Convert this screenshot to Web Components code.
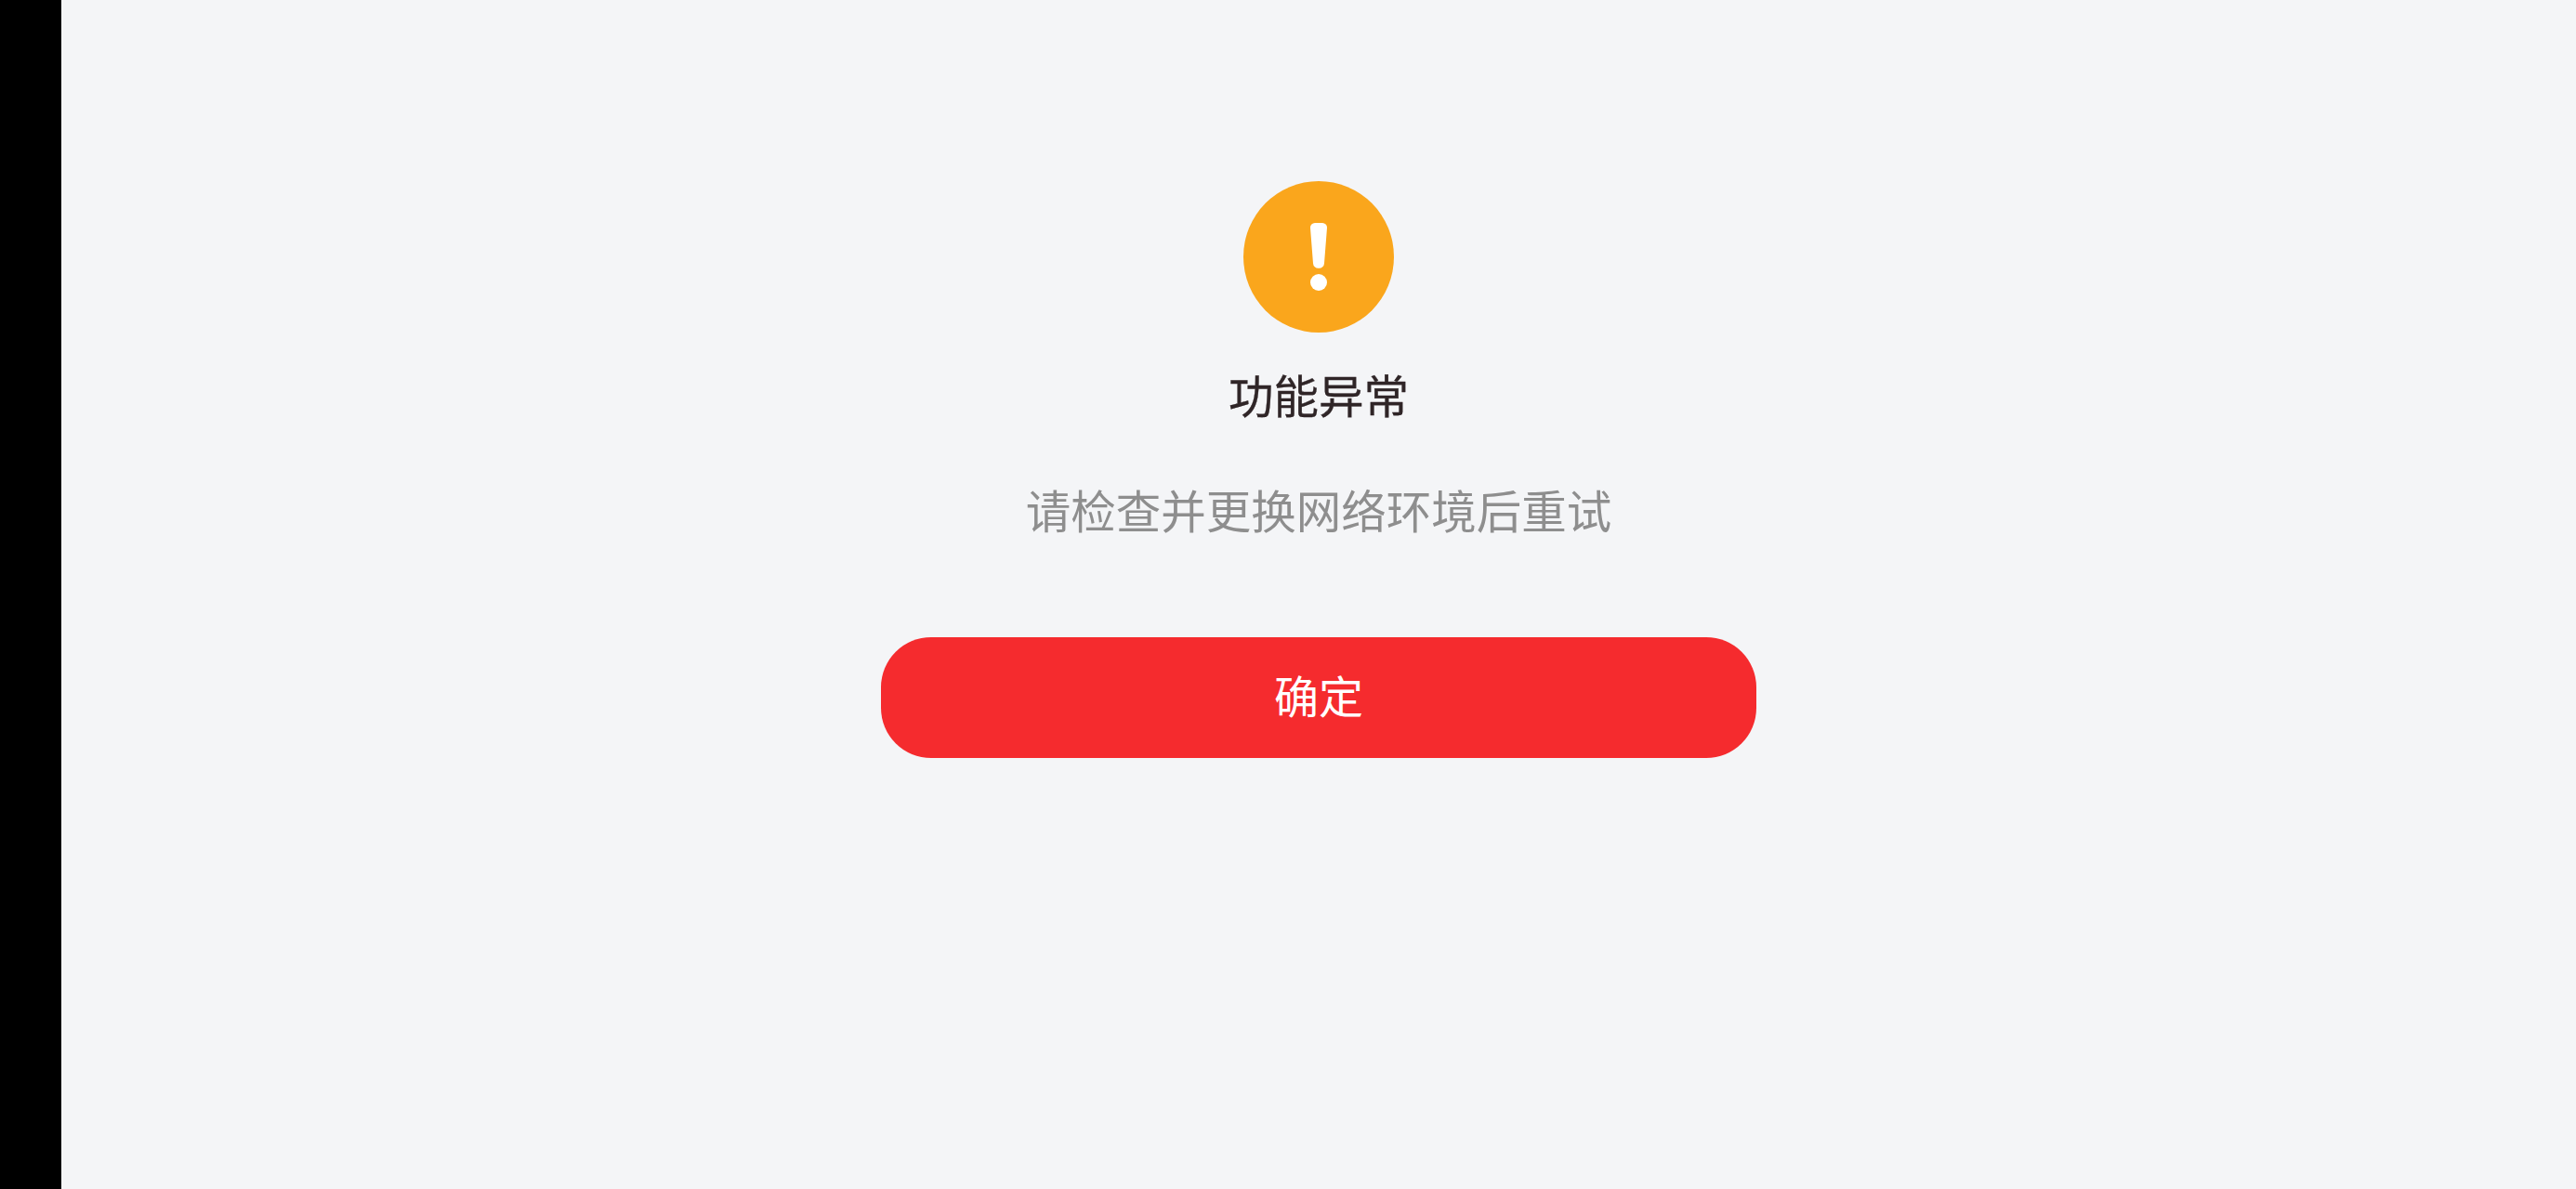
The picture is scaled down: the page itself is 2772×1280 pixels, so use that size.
<!DOCTYPE html>
<html lang="zh-CN">
<head>
<meta charset="utf-8">
<title>功能异常</title>
<style>
html,body{margin:0;padding:0;height:100%;background:#000}
</style>
</head>
<body>
<error-page>
  <warn-icon></warn-icon>
  <span slot="title">功能异常</span>
  <span slot="message">请检查并更换网络环境后重试</span>
  <span slot="action">确定</span>
</error-page>
<script>
class WarnIcon extends HTMLElement{
  constructor(){
    super();
    this.attachShadow({mode:'open'}).innerHTML=`
    <style>:host{display:block;width:162px;height:163px}svg{display:block}</style>
    <svg width="162" height="163" viewBox="0 0 162 163" aria-hidden="true">
      <ellipse cx="81" cy="81.500" rx="81" ry="81.500" fill="#FAA61C"/>
      <path d="M77 45h8a5 5 0 0 1 5 5.300l-3 38.200a5.600 5.600 0 0 1-5.600 5.300h-.8a5.600 5.600 0 0 1-5.600-5.300l-3-38.200a5 5 0 0 1 5-5.300z" fill="#fff"/>
      <circle cx="81" cy="109" r="9" fill="#fff"/>
    </svg>`;
  }
}
class ErrorPage extends HTMLElement{
  constructor(){
    super();
    this.attachShadow({mode:'open'}).innerHTML=`
    <style>
      :host{display:flex;height:1280px;width:2772px;background:#000;font-family:"Noto Sans CJK SC","Noto Sans CJK JP",sans-serif;overflow:hidden}
      .rail{flex:0 0 66px;background:#000}
      .main{flex:1;background:#F4F5F7;display:flex;flex-direction:column;align-items:center;padding-top:195px;box-sizing:border-box}
      .title{margin-top:31px;font-size:48.500px;line-height:70px;color:#2F2527;font-weight:400;-webkit-text-stroke:.3px #2F2527}
      .msg{margin-top:54px;font-size:48.500px;line-height:70px;color:#8E8E8E}
      .btn{margin-top:103px;width:942px;height:130px;box-sizing:border-box;padding-bottom:9px;border-radius:54px;background:#F52B2E;color:#fff;font-size:48px;display:flex;align-items:center;justify-content:center;border:0}
    </style>
    <div class="rail"></div>
    <div class="main">
      <slot></slot>
      <div class="title"><slot name="title"></slot></div>
      <div class="msg"><slot name="message"></slot></div>
      <div class="btn" role="button"><slot name="action"></slot></div>
    </div>`;
  }
}
customElements.define('warn-icon',WarnIcon);
customElements.define('error-page',ErrorPage);
</script>
</body>
</html>
